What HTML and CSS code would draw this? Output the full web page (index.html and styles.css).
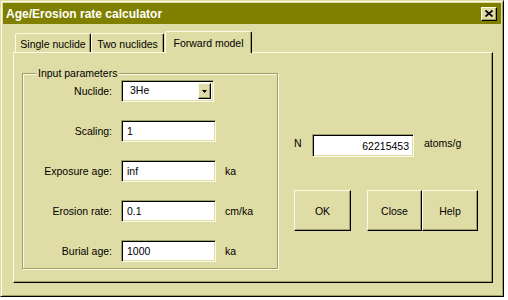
FILE: index.html
```html
<!DOCTYPE html>
<html lang="en">
  <head>
    <meta charset="UTF-8" />
    <meta name="viewport" content="width=device-width, initial-scale=1.0" />
    <title>Age/Erosion rate calculator</title>
    <link rel="stylesheet" href="styles.css">
  </head>
  <body>
    <div class="window">
      <div class="title_bar">
        <span class="title">Age/Erosion rate calculator</span>
        <span class="close_btn">
          <svg width="8" height="7" viewBox="0 0 8 7"><path d="M0.5 0.5 L7.5 6.5 M7.5 0.5 L0.5 6.5" stroke="#000" stroke-width="1.7" fill="none"/></svg>
        </span>
      </div>
      <div class="client">
        <div class="tabs">
          <div class="tab tab1">Single nuclide</div>
          <div class="tab tab2">Two nuclides</div>
          <div class="tab tab3 on">Forward model</div>
        </div>
        <div class="panel">
          <div class="group">
            <span class="group_label">Input parameters</span>
            <div class="form">
              <label>Nuclide:</label>
              <div class="combo">
                <span class="combo_val">3He</span>
                <span class="combo_btn">
                  <svg width="5" height="3" viewBox="0 0 5 3"><polygon points="0,0 5,0 2.5,3" fill="#000"/></svg>
                </span>
              </div>
              <span></span>

              <label>Scaling:</label>
              <div class="field">1</div>
              <span></span>

              <label>Exposure age:</label>
              <div class="field">inf</div>
              <span class="unit">ka</span>

              <label>Erosion rate:</label>
              <div class="field">0.1</div>
              <span class="unit">cm/ka</span>

              <label>Burial age:</label>
              <div class="field">1000</div>
              <span class="unit">ka</span>
            </div>
          </div>
          <div class="side">
            <div class="result">
              <span class="n_label">N</span>
              <div class="field n_field">62215453</div>
              <span class="n_unit">atoms/g</span>
            </div>
            <div class="buttons">
              <button class="btn btn_ok">OK</button>
              <button class="btn btn_close">Close</button>
              <button class="btn btn_help">Help</button>
            </div>
          </div>
        </div>
      </div>
    </div>
  </body>
</html>
```

FILE: styles.css
```css
* {
  margin: 0;
  padding: 0;
  box-sizing: border-box;
}
body {
  background-color: #fff;
  font-family: "Liberation Sans", Arial, sans-serif;
  font-size: 10.5px;
  color: #000;
}
.window {
  width: 504px;
  height: 297px;
  background-color: #dfdda5;
  border: 1px solid;
  border-color: #dfdda5 #000 #000 #dfdda5;
  box-shadow: inset 1px 1px #fbfbe8, inset -1px -1px #a19f68;
  padding: 2px;
  display: flex;
  flex-direction: column;
}
.title_bar {
  height: 21px;
  flex: none;
  background-color: #808000;
  color: #fff;
  font-size: 12px;
  font-weight: bold;
  display: flex;
  align-items: center;
  justify-content: space-between;
  padding: 0 4px 0 3px;
}
.close_btn {
  width: 16px;
  height: 14px;
  background-color: #dfdda5;
  border: 1px solid;
  border-color: #fbfbe8 #000 #000 #fbfbe8;
  box-shadow: inset -1px -1px #a19f68;
  display: flex;
  align-items: center;
  justify-content: center;
}
.client {
  flex: 1;
  display: flex;
  flex-direction: column;
  padding: 7px 8px 11px 10px;
}
.tabs {
  height: 22px;
  flex: none;
  display: flex;
  align-items: flex-end;
  padding-left: 2px;
  margin-bottom: -1px;
  position: relative;
  z-index: 1;
}
.tab {
  height: 19px;
  margin-bottom: 1px;
  border: 1px solid;
  border-bottom: none;
  border-color: #fbfbe8 #000 transparent #fbfbe8;
  border-radius: 2px 2px 0 0;
  box-shadow: inset -1px 0 #a19f68;
  background-color: #dfdda5;
  display: flex;
  align-items: center;
  justify-content: center;
  padding-top: 2px;
}
.tab1 {
  width: 76px;
}
.tab2 {
  width: 73px;
}
.tab3 {
  width: 87px;
  margin-left: 1px;
}
.tab.on {
  height: 22px;
  margin-bottom: 0;
  padding-top: 0;
}
.panel {
  flex: 1;
  display: flex;
  align-items: flex-start;
  border: 1px solid;
  border-color: #fbfbe8 #000 #000 #fbfbe8;
  box-shadow: inset -1px -1px #a19f68;
  padding-left: 8px;
}
.group {
  position: relative;
  width: 256px;
  margin-top: 20px;
  border: 1px solid #a19f68;
  box-shadow: inset 1px 1px #fbfbe8, 1px 1px #fbfbe8;
  padding: 6px 0 6px 0;
}
.group_label {
  position: absolute;
  top: -7px;
  left: 13px;
  padding: 0 2px;
  line-height: 13px;
  background-color: #dfdda5;
}
.form {
  display: grid;
  grid-template-columns: 89px 95px auto;
  column-gap: 9px;
  row-gap: 18px;
  align-items: center;
}
.form label {
  text-align: right;
}
.field {
  height: 22px;
  background-color: #fff;
  border: 1px solid;
  border-color: #a19f68 #fbfbe8 #fbfbe8 #a19f68;
  box-shadow: inset 1px 1px #000, inset -1px -1px #dfdda5;
  padding: 0 5px;
  display: flex;
  align-items: center;
  white-space: nowrap;
}
.combo {
  height: 22px;
  width: 93px;
  background-color: #fff;
  border: 1px solid;
  border-color: #a19f68 #fbfbe8 #fbfbe8 #a19f68;
  box-shadow: inset 1px 1px #000, inset -1px -1px #dfdda5;
  padding: 2px 2px 2px 2px;
  display: flex;
  justify-content: space-between;
}
.combo_val {
  padding: 1px 0 0 6px;
}
.combo_btn {
  width: 13px;
  height: 100%;
  background-color: #dfdda5;
  border: 1px solid;
  border-color: #fbfbe8 #000 #000 #fbfbe8;
  box-shadow: inset -1px -1px #a19f68;
  display: flex;
  align-items: center;
  justify-content: center;
}
.side {
  margin-left: 16px;
  padding-top: 81px;
}
.result {
  display: flex;
  align-items: flex-start;
}
.n_label {
  width: 18px;
  margin-top: 3px;
}
.n_field {
  width: 102px;
  height: 23px;
  justify-content: flex-end;
  padding-right: 4px;
}
.n_unit {
  margin-left: 10px;
  margin-top: 3px;
}
.buttons {
  display: flex;
  margin-top: 33px;
}
.btn {
  height: 41px;
  font: inherit;
  color: #000;
  background-color: #dfdda5;
  border: 1px solid;
  border-color: #fbfbe8 #000 #000 #fbfbe8;
  box-shadow: inset -1px -1px #a19f68;
}
.btn_ok {
  width: 57px;
  margin-right: 16px;
}
.btn_close {
  width: 55px;
}
.btn_help {
  width: 56px;
}
```
